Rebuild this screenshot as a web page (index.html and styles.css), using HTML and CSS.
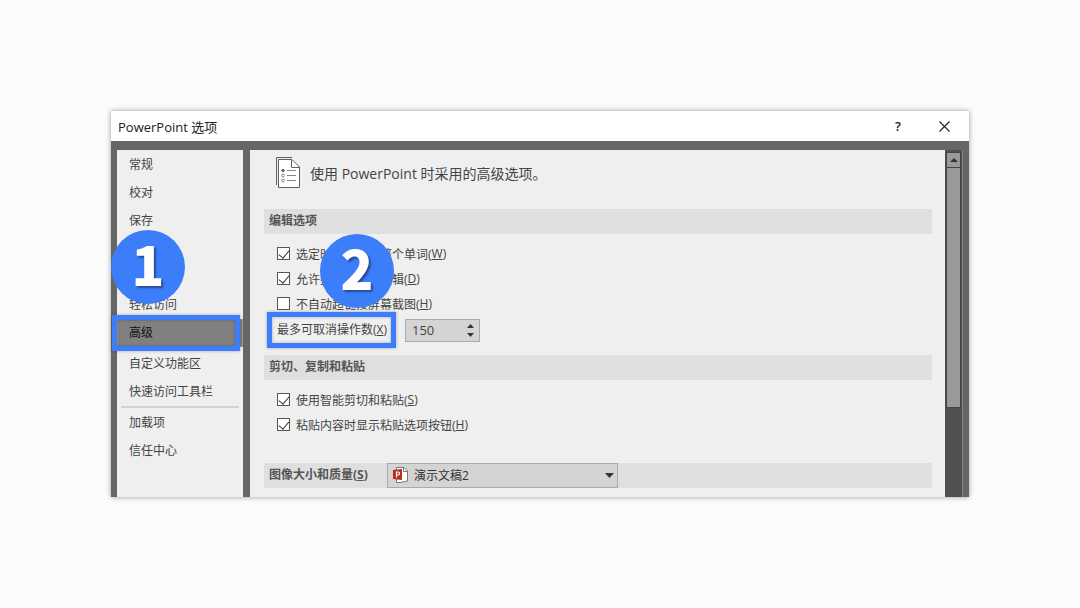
FILE: index.html
```html
<!DOCTYPE html>
<html lang="zh-CN">
<head>
    <meta charset="UTF-8">
    <meta name="viewport" content="width=device-width, initial-scale=1.0">
    <title>PowerPoint 选项</title>
    <link rel="stylesheet" href="styles.css">
</head>
<body>
    <div class="dialog">
        <header class="titlebar">
            <h1>PowerPoint 选项</h1>
            <button type="button" class="help" aria-label="帮助">?</button>
            <button type="button" class="close" aria-label="关闭">
                <svg width="11" height="11" viewBox="0 0 11 11"><path d="M0.5 0.5L10.5 10.5M10.5 0.5L0.5 10.5" stroke="#222" stroke-width="1.1"/></svg>
            </button>
        </header>

        <div class="frame">
            <nav class="sidebar">
                <a href="#">常规</a>
                <a href="#">校对</a>
                <a href="#">保存</a>
                <a href="#">版式</a>
                <a href="#">语言</a>
                <a href="#">轻松访问</a>
                <a href="#" class="active">高级<span class="badge badge-one">1</span></a>
                <hr>
                <a href="#">自定义功能区</a>
                <a href="#">快速访问工具栏</a>
                <hr>
                <a href="#">加载项</a>
                <a href="#">信任中心</a>
            </nav>

            <main class="content">
                <div class="intro">
                    <svg width="24" height="31" viewBox="0 0 24 31" fill="none" stroke="#606060">
                        <path d="M0.5 28V0.5H16"/>
                        <path d="M2.5 2.5H16L23.500 10V30.500H2.5Z" fill="#fff"/>
                        <path d="M15.500 2.500V10.500H23.500"/>
                        <path d="M11 13.500H20M11 18.500H20M11 23.500H20" stroke="#888"/>
                        <circle cx="7" cy="13.500" r="1.200" fill="#606060"/>
                        <circle cx="7" cy="18.500" r="1.400" stroke="#888"/>
                        <circle cx="7" cy="23.500" r="1.400" stroke="#888"/>
                    </svg>
                    <p>使用 PowerPoint 时采用的高级选项。</p>
                </div>

                <h2>编辑选项</h2>
                <div class="options">
                    <label><input type="checkbox" checked>选定时自动选定整个单词(<u>W</u>)</label>
                    <label><input type="checkbox" checked>允许拖放式文字编辑(<u>D</u>)</label>
                    <label><input type="checkbox">不自动超链接屏幕截图(<u>H</u>)</label>
                    <div class="undo-row">
                        <label class="undo-label" for="undo">最多可取消操作数(<u>X</u>)<span class="badge badge-two">2</span></label>
                        <div class="spinner">
                            <input type="text" id="undo" value="150" inputmode="numeric">
                            <div class="arrows">
                                <button type="button" id="up" aria-label="增加"><svg width="7" height="4" viewBox="0 0 7 4"><path d="M0 4L3.500 0L7 4Z" fill="#333"/></svg></button>
                                <button type="button" id="down" aria-label="减少"><svg width="7" height="4" viewBox="0 0 7 4"><path d="M0 0L3.500 4L7 0Z" fill="#333"/></svg></button>
                            </div>
                        </div>
                    </div>
                </div>

                <h2>剪切、复制和粘贴</h2>
                <div class="options paste">
                    <label><input type="checkbox" checked>使用智能剪切和粘贴(<u>S</u>)</label>
                    <label><input type="checkbox" checked>粘贴内容时显示粘贴选项按钮(<u>H</u>)</label>
                </div>

                <div class="image-row">
                    <label for="doc">图像大小和质量(<u>S</u>)</label>
                    <div class="select">
                        <select id="doc"><option>演示文稿2</option></select>
                        <svg class="file-icon" width="16" height="16" viewBox="0 0 16 16">
                            <path d="M3.500 0.500H11L14.500 4V14L7 15.500H3.500Z" fill="#fff" stroke="#777"/>
                            <path d="M10.500 0.500V4.500H14.500" fill="none" stroke="#777"/>
                            <path d="M0 3L9 2V13L0 12Z" fill="#b7301c"/>
                            <path d="M3.500 10.500V5H5.200Q6.500 5 6.500 6.500T5.200 8H3.500" fill="none" stroke="#fff" stroke-width="1.200"/>
                        </svg>
                        <svg class="caret" width="9" height="5" viewBox="0 0 9 5"><path d="M0 0H9L4.500 5Z" fill="#333"/></svg>
                    </div>
                </div>
            </main>

            <div class="scrollbar">
                <button type="button" aria-label="向上滚动"><svg width="8" height="4" viewBox="0 0 8 4"><path d="M0 4L4 0L8 4Z" fill="#333"/></svg></button>
                <div class="thumb"></div>
            </div>
        </div>
    </div>

    <script>
        const undo = document.getElementById('undo');

        function step(amount) {
            const value = Number(undo.value) + amount;
            undo.value = Math.min(150, Math.max(3, value));
        }

        document.getElementById('up').addEventListener('click', () => step(1));
        document.getElementById('down').addEventListener('click', () => step(-1));
    </script>
</body>
</html>
```
FILE: styles.css
```css
* {
    box-sizing: border-box;
}

body {
    margin: 0;
    padding: 111px;
    background-color: #fbfbfb;
    color: #444;
    font-family: 'Open Sans', 'Noto Sans CJK SC', sans-serif;
    font-size: 12px;
}

button,
input,
select {
    font-family: inherit;
    color: inherit;
}

button {
    display: flex;
    align-items: center;
    justify-content: center;
    padding: 0;
    border: none;
    background: none;
    cursor: pointer;
}

.dialog {
    background-color: #666;
    box-shadow: 0 0 5px rgba(0, 0, 0, 0.4);
}

.titlebar {
    display: flex;
    align-items: center;
    height: 30px;
    padding: 0 8px 0 7px;
    background-color: #fff;
    color: #222;
}

.titlebar h1 {
    flex: 1;
    margin: 0;
    font-size: 13px;
    font-weight: normal;
}

.titlebar button {
    width: 34px;
    height: 30px;
    font-size: 13px;
    font-weight: 600;
}

.titlebar .help {
    margin-right: 12px;
}

.frame {
    display: flex;
    padding: 9px 7px 0 6px;
}

.sidebar {
    width: 126px;
    margin-right: 7px;
    padding-top: 1px;
    background-color: #efefef;
}

.sidebar a {
    display: block;
    height: 28px;
    padding-left: 12px;
    line-height: 28px;
    color: #444;
    text-decoration: none;
}

.sidebar .active {
    position: relative;
    background-color: #808080;
    border: 1px solid #999;
    padding-left: 11px;
    line-height: 26px;
    color: #111;
}

.sidebar hr {
    height: 2px;
    margin: 0 4px 1px;
    border: none;
    background-color: #d2d2d2;
}

/* blue frames around the two steps */
.active::after,
.undo-label::after {
    content: '';
    position: absolute;
    border: 5px solid #3c7dfa;
    box-shadow: 0 0 3px rgba(0, 0, 0, 0.3), inset 0 0 3px rgba(0, 0, 0, 0.3);
}

.active::after {
    inset: -5px 2px -5px -6px;
}

.undo-label::after {
    inset: -6px -4px -6px -10px;
}

.badge {
    position: absolute;
    z-index: 1;
    width: 74px;
    height: 74px;
    border-radius: 50%;
    background-color: #3c7dfa;
    color: #fff;
    font-family: 'Noto Sans CJK SC', sans-serif;
    font-size: 54px;
    font-weight: 900;
    line-height: 66px;
    text-align: center;
    text-shadow: 2px 2px 2px rgba(0, 0, 0, 0.4);
}

.badge-one {
    left: -7px;
    bottom: 42px;
}

.badge-two {
    left: 43px;
    bottom: 34px;
}

.content {
    flex: 1;
    padding: 0 13px 9px 14px;
    background-color: #efefef;
}

.intro {
    display: flex;
    align-items: center;
    gap: 10px;
    height: 59px;
    padding: 0 0 14px 12px;
}

.intro p {
    margin: 0;
    font-size: 14px;
}

h2,
.image-row {
    height: 25px;
    margin: 0;
    padding-left: 5px;
    background-color: #dfdfdf;
    font-size: 12px;
    font-weight: bold;
    line-height: 24px;
    color: #555;
}

.options {
    height: 121px;
    padding: 7px 13px 0;
}

.options.paste {
    height: 83px;
}

.options > label {
    display: flex;
    align-items: center;
    height: 25px;
}

input[type="checkbox"] {
    appearance: none;
    width: 13px;
    height: 13px;
    margin: 0 6px 0 0;
    border: 1px solid #555;
    background-color: #fff;
}

input[type="checkbox"]:checked::after {
    content: '';
    display: block;
    width: 5px;
    height: 9px;
    margin: 0 0 0 3px;
    border: solid #333;
    border-width: 0 1px 1px 0;
    transform: rotate(40deg);
}

.undo-row {
    display: flex;
    align-items: center;
    height: 28px;
}

.undo-label {
    position: relative;
    width: 115px;
    height: 24px;
    line-height: 24px;
    white-space: nowrap;
}

.spinner {
    display: flex;
    width: 75px;
    height: 23px;
    margin-left: 13px;
    border: 1px solid #ababab;
    background-color: #d4d4d4;
}

.spinner input {
    width: 56px;
    padding: 0 6px;
    border: none;
    background: none;
    font-size: 13px;
}

.arrows {
    display: flex;
    flex-direction: column;
    justify-content: center;
    gap: 5px;
    width: 17px;
}

.image-row {
    display: flex;
}

.image-row label {
    width: 118px;
}

.select {
    position: relative;
    width: 231px;
}

.select select {
    appearance: none;
    display: block;
    width: 100%;
    height: 25px;
    padding: 0 26px;
    border: 1px solid #ababab;
    border-radius: 0;
    background-color: #d4d4d4;
    font-size: 12px;
    color: #333;
}

.file-icon {
    position: absolute;
    top: 4px;
    left: 6px;
}

.caret {
    position: absolute;
    top: 10px;
    right: 4px;
}

.scrollbar {
    width: 17px;
    padding: 2px 1px 0;
    background-color: #505050;
    box-shadow: 1px 0 #858585;
}

.scrollbar button {
    width: 15px;
    height: 16px;
    border: 1px solid #444;
    background-color: #999;
}

.thumb {
    height: 240px;
    border: 1px solid #444;
    border-top: none;
    background-color: #999;
}
```
